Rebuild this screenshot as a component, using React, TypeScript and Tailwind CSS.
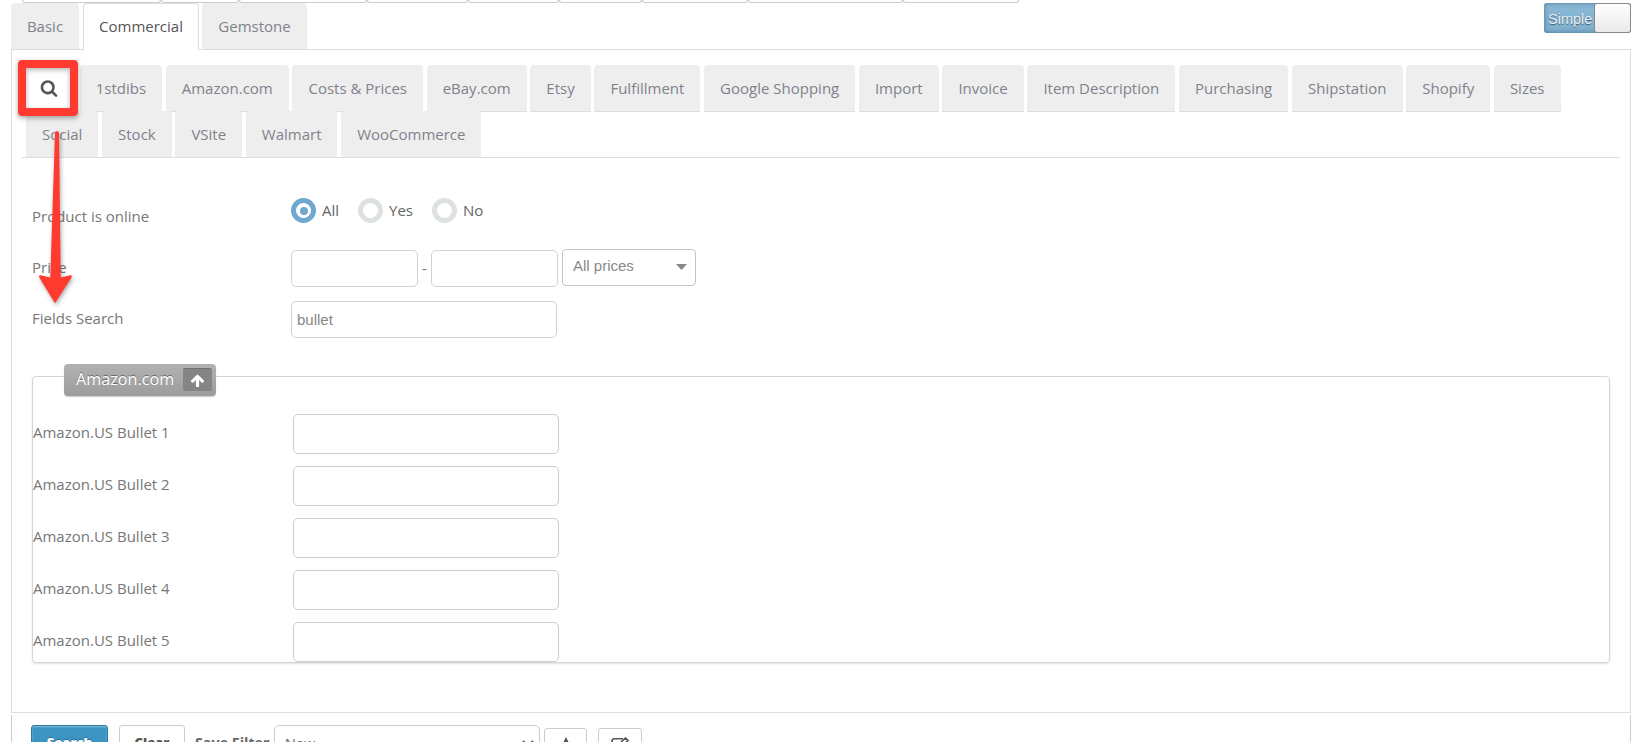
import { ReactNode } from 'react';
import clsx from 'clsx';

const stripButtons = [
  'w-[139px]',
  'w-[78px]',
  'w-[128px]',
  'w-[101px]',
  'w-[91px]',
  'w-[83px]',
  'w-[106px]',
  'w-[155px]',
  'w-[116px]',
];

const firstRow = [
  '1stdibs',
  'Amazon.com',
  'Costs & Prices',
  'eBay.com',
  'Etsy',
  'Fulfillment',
  'Google Shopping',
  'Import',
  'Invoice',
  'Item Description',
  'Purchasing',
  'Shipstation',
  'Shopify',
  'Sizes',
];

const secondRow = ['Social', 'Stock', 'VSite', 'Walmart', 'WooCommerce'];

const bullets = [1, 2, 3, 4, 5];

const SearchIcon = () => (
  <svg viewBox="0 0 1792 1792" className="w-[18px] h-[18px] fill-[#555]">
    <path d="M1216 832q0-185-131.5-316.5t-316.5-131.5-316.5 131.5-131.5 316.5 131.5 316.5 316.5 131.5 316.5-131.5 131.5-316.5zm512 832q0 52-38 90t-90 38q-54 0-90-38l-343-342q-179 124-399 124-143 0-273.5-55.5t-225-150-150-225-55.5-273.5 55.5-273.5 150-225 225-150 273.5-55.5 273.5 55.5 225 150 150 225 55.5 273.5q0 220-124 399l343 343q37 37 37 90z" />
  </svg>
);

const ArrowUpIcon = ({ className }: { className: string }) => (
  <svg viewBox="0 0 1792 1792" className={className}>
    <path d="M1675 971q0 51-37 90l-75 75q-38 38-91 38-54 0-90-38l-294-293v704q0 52-37.5 84.5t-90.5 32.5h-128q-53 0-90.5-32.5t-37.5-84.5v-704l-294 293q-36 38-90 38t-90-38l-75-75q-38-38-38-90 0-53 38-91l651-651q35-37 90-37 54 0 91 37l651 651q37 39 37 91z" />
  </svg>
);

const Tab = ({ children }: { children: ReactNode }) => (
  <div className="h-[47px] px-4 pt-[12px] leading-[22px] rounded-t-[4px] bg-[#eee] border-b border-[#ddd] text-[#7f828b] whitespace-nowrap">
    {children}
  </div>
);

const Radio = ({ label, checked, className }: { label: string; checked?: boolean; className?: string }) => (
  <label className={clsx('flex gap-[6px]', className)}>
    <span
      className={clsx(
        'w-[25px] h-[25px] rounded-full flex items-center justify-center bg-white',
        checked ? 'border-[5px] border-[#6fa8cf]' : 'border-[5px] border-[#dde1e2]'
      )}
    >
      {checked && <span className="w-[8px] h-[8px] rounded-full bg-[#6fa8cf]" />}
    </span>
    <span className="text-[#666] leading-[24px]">{label}</span>
  </label>
);

const Toggle = () => (
  <div className="mt-[3px] mr-[2px] w-[87px] h-[30px] flex rounded-[3px] overflow-hidden bg-linear-to-b from-[#8bb9d6] to-[#7fb0cf] shadow-[inset_0_0_5px_rgba(0,40,70,0.45)]">
    <span className="w-[50px] pl-[4px] text-[14.5px] leading-[32px] text-[#e6eef3] font-['Liberation_Sans',sans-serif] [text-shadow:0_1px_1px_rgba(0,0,0,0.5)]">
      Simple
    </span>
    <span className="w-[37px] h-[30px] rounded-[3px] border border-[#8a8a8a] bg-linear-to-b from-white to-[#e9e9e9]" />
  </div>
);

// Red box round the search tab and the arrow that points to Fields Search
const Callout = () => (
  <>
    <div className="absolute left-[18px] top-[60px] w-[60px] h-[56px] rounded-[4px] border-8 border-[#ff3b30] shadow-[0_2px_5px_rgba(0,0,0,0.35),inset_0_2px_5px_rgba(0,0,0,0.3)]" />
    <svg
      viewBox="0 0 50 180"
      className="absolute left-[30px] top-[130px] w-[50px] h-[180px] drop-shadow-[1px_2px_2px_rgba(0,0,0,0.35)]"
    >
      <path
        d="M25 3.500Q25 1 27 1Q29 1 29 3.500L30.700 147.500L40.500 145.300Q42.500 145.300 41.500 147.500L25.500 172.500Q25 173.500 24.500 172.500L9.300 147.500Q8.500 145 10.500 145.300L20.300 147.500Z"
        fill="#ff3b30"
      />
    </svg>
  </>
);

const App = () => {
  return (
    <div className="relative w-[1633px] h-[742px] overflow-hidden bg-white text-[15px] text-[#777] font-['Open_Sans',sans-serif]">
      <div className="h-[49px] flex justify-between">
        <div>
          <div className="flex h-[3px] pl-[22px]">
            {stripButtons.map((width) => (
              <div key={width} className={clsx('h-[3px] rounded-b-[3px] border border-t-0 border-[#ccc]', width)} />
            ))}
          </div>
          <div className="flex pl-[11px] leading-[22px]">
            <div className="w-[68px] h-[46px] pt-[12px] text-center rounded-t-[4px] bg-[#eee] text-[#7f828b]">Basic</div>
            <div className="relative z-10 w-[116px] h-[47px] ml-[4px] pt-[11px] text-center rounded-t-[4px] border border-b-0 border-[#ddd] bg-white text-[#555]">
              Commercial
            </div>
            <div className="w-[105px] h-[46px] ml-[3px] pt-[12px] text-center rounded-t-[4px] bg-[#eee] text-[#7f828b]">
              Gemstone
            </div>
          </div>
        </div>
        <Toggle />
      </div>

      <div className="ml-[11px] w-[1620px] h-[664px] border border-[#ddd]">
        {/* Marketplace tabs */}
        <div className="ml-[10px] mr-[10px] pl-[4px] pt-[15px] border-b border-[#ddd]">
          <div className="flex gap-[3.700px]">
            <div className="w-[50px] h-[46px] pl-[14px] pt-[14px] bg-white">
              <SearchIcon />
            </div>
            {firstRow.map((name) => (
              <Tab key={name}>{name}</Tab>
            ))}
          </div>
          <div className="flex gap-[3.700px] -mt-px -mb-px">
            {secondRow.map((name) => (
              <Tab key={name}>{name}</Tab>
            ))}
          </div>
        </div>

        {/* Filters */}
        <div className="pl-[20px] pt-[40px]">
          <div className="flex h-[52px]">
            <div className="w-[259px] pt-[7px] leading-[22px]">Product is online</div>
            <div className="flex h-[25px]">
              <Radio label="All" checked />
              <Radio label="Yes" className="ml-[19px]" />
              <Radio label="No" className="ml-[19px]" />
            </div>
          </div>
          <div className="flex h-[51px]">
            <div className="w-[259px] pt-[6px] leading-[22px]">Price</div>
            <input className="w-[127px] h-[37px] rounded-[5px] border border-[#d2d2d2]" />
            <span className="w-[13px] pt-[7px] text-center leading-[22px]">-</span>
            <input className="w-[127px] h-[37px] rounded-[5px] border border-[#d2d2d2]" />
            <div className="w-[134px] h-[37px] ml-[4px] -mt-px pl-[10px] pr-[8px] flex justify-between rounded-[4px] border border-[#c4c4c4] text-[#888] font-['Liberation_Sans',sans-serif]">
              <span className="leading-[32px]">All prices</span>
              <svg viewBox="0 0 11 6" className="w-[11px] h-[6px] mt-[14px] fill-[#888]">
                <path d="M0 0h11L5.500 6z" />
              </svg>
            </div>
          </div>
          <div className="flex h-[63px]">
            <div className="w-[259px] pt-[6px] leading-[22px]">Fields Search</div>
            <input
              className="w-[266px] h-[37px] px-[5px] rounded-[5px] border border-[#d2d2d2] text-[#888] font-['Liberation_Sans',sans-serif]"
              defaultValue="bullet"
            />
          </div>
        </div>

        {/* Amazon.com group */}
        <div className="ml-[20px] mt-[12px] w-[1578px] h-[287px] rounded-[4px] border border-[#d4d4d4] shadow-[0_1px_2px_rgba(0,0,0,0.12)]">
          <div className="-mt-[13px] ml-[31px] w-[152px] h-[32px] pl-[12px] pr-[4px] flex justify-between rounded-[4px] bg-linear-to-b from-[#b2b2b2] to-[#9c9c9c] shadow-[0_1px_1px_rgba(0,0,0,0.2)]">
            <span className="text-[16.200px] leading-[30px] text-white [text-shadow:0_-1px_0_rgba(0,0,0,0.4)]">
              Amazon.com
            </span>
            <span className="w-[29px] h-[23px] mt-[4px] flex items-center justify-center rounded-[2px] border-t border-[#717171] bg-[#858585]">
              <ArrowUpIcon className="w-[15px] h-[15px] mt-px fill-white" />
            </span>
          </div>
          <div className="mt-[18px] flex flex-col gap-[12px]">
            {bullets.map((n) => (
              <div key={n} className="flex h-[40px]">
                <div className="w-[260px] pt-[7px] leading-[22px]">Amazon.US Bullet {n}</div>
                <input className="w-[266px] h-[40px] rounded-[5px] border border-[#ccc]" />
              </div>
            ))}
          </div>
        </div>
      </div>

      {/* Bottom actions */}
      <div className="ml-[11px] mt-[2px] w-[1620px] h-[27px] pl-[19px] pt-[10px] flex items-start border-x border-[#ccc]">
        <button className="w-[77px] h-[36px] pb-[3px] rounded-[3px] border border-[#2b7ba6] bg-[#3c94c2] text-[13px] leading-[28px] font-extrabold text-white shadow-[inset_0_1px_2px_rgba(255,255,255,0.4)] [text-shadow:0_-1px_0_rgba(0,0,0,0.25)]">
          Search
        </button>
        <button className="w-[66px] h-[36px] ml-[11px] pb-[3px] rounded-[3px] border border-[#ccc] bg-white text-[13px] leading-[28px] font-extrabold text-[#555]">
          Clear
        </button>
        <span className="w-[79px] ml-[10px] pt-[6px] text-[14.300px] leading-[23px] font-bold text-[#666] whitespace-nowrap">
          Save Filter
        </span>
        <div className="w-[266px] h-[37px] pl-[10px] pr-[5px] flex justify-between rounded-[5px] border border-[#ccc] text-[#777] font-['Liberation_Sans',sans-serif]">
          <span className="leading-[36px]">New</span>
          <svg viewBox="0 0 12 8" className="w-[12px] h-[8px] mt-[14px]" fill="none" stroke="#555" strokeWidth="1.800">
            <path d="M1 1l5 5 5-5" />
          </svg>
        </div>
        <div className="w-[43px] h-[34px] ml-[4px] mt-[3px] pt-[8px] flex justify-center rounded-[3px] border border-[#ccc]">
          <svg viewBox="0 0 12 12" className="w-[12px] h-[12px] fill-[#555]">
            <path d="M6 0l6 12H0z" />
          </svg>
        </div>
        <div className="w-[44px] h-[34px] ml-[11px] mt-[3px] pt-[8px] flex justify-center rounded-[3px] border border-[#ccc]">
          <svg viewBox="0 0 18 16" className="w-[18px] h-[16px]" fill="none" stroke="#555" strokeWidth="1.600">
            <path d="M12 1.800H3.500Q1 1.800 1 4.300V12Q1 14.500 3.500 14.500H11Q13.500 14.500 13.500 12V9.500" />
            <path d="M14.500 1l2.500 2.500L9.500 10.500H7V8z" />
          </svg>
        </div>
      </div>

      <Callout />
    </div>
  );
};

export default App;
